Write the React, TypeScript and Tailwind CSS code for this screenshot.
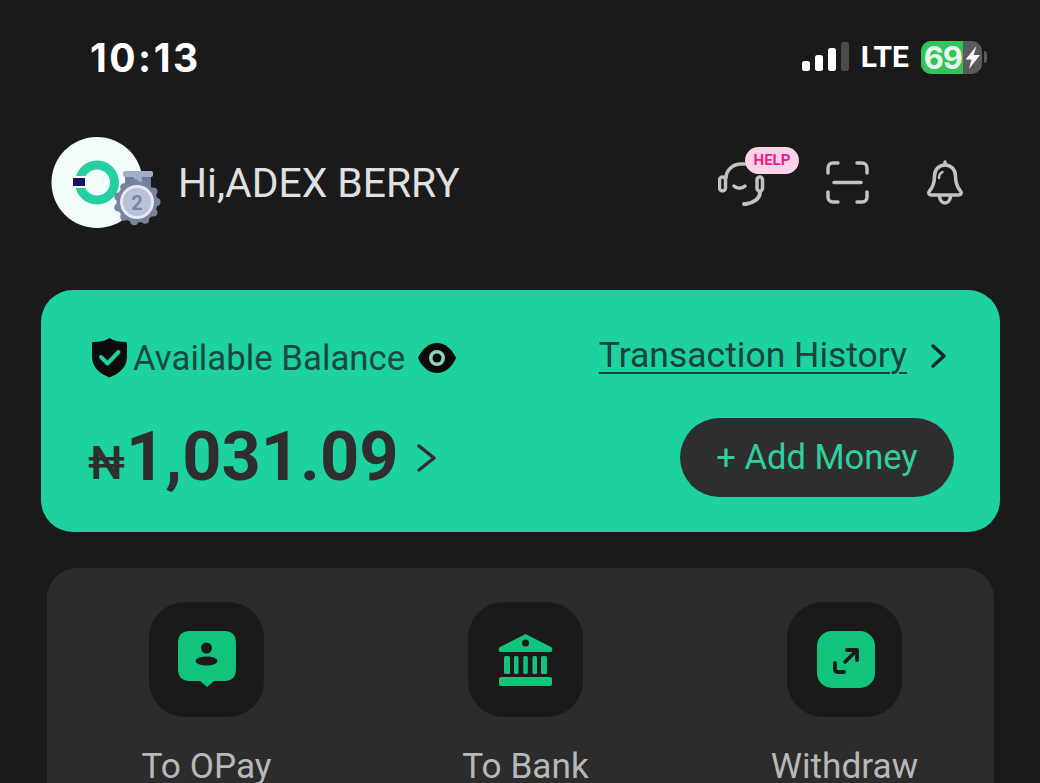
import React from "react";

const gearBumps = Array.from({ length: 11 }, (_, i) => {
  const a = (i / 11) * Math.PI * 2;
  return { x: 97 + Math.cos(a) * 19.5, y: 77 + Math.sin(a) * 19.5 };
});

function Avatar() {
  return (
    <svg width="130" height="110" viewBox="0 0 130 110" className="shrink-0">
      <circle cx="57" cy="57.5" r="45.5" fill="#f2fdfa" />
      <circle cx="57" cy="57.5" r="17.5" fill="none" stroke="#25cf9f" strokeWidth="9" />
      <rect x="30" y="51" width="18" height="12" fill="#f2fdfa" />
      <rect x="33" y="53" width="12" height="8" fill="#1b0f6b" />
      <rect x="83" y="46" width="30" height="6" rx="2" fill="#a3adc4" />
      <path d="M85 52h26v10H85z" fill="#6d7b9e" />
      <path d="M94 52h8v6h-8z" fill="#a3adc4" />
      {gearBumps.map((b, i) => (
        <circle key={i} cx={b.x} cy={b.y} r="4" fill="#76849f" />
      ))}
      <circle cx="97" cy="77" r="20.500" fill="#76849f" />
      <circle cx="97" cy="77" r="17" fill="#e6e8f3" />
      <circle cx="97" cy="77" r="14" fill="#b9c1d8" />
      <text x="97" y="84.500" textAnchor="middle" fontFamily="Roboto, sans-serif" fontWeight="700" fontSize="20" fill="#7685a8">2</text>
    </svg>
  );
}

function Signal() {
  return (
    <svg width="47" height="32" viewBox="0 0 47 32">
      <rect x="0" y="20" width="8" height="10" rx="2.500" fill="#fff" />
      <rect x="13" y="14" width="8" height="16" rx="2.500" fill="#fff" />
      <rect x="26" y="7" width="8" height="23" rx="2.500" fill="#fff" />
      <rect x="39" y="1" width="8" height="29" rx="2.500" fill="#4b4b4b" />
    </svg>
  );
}

function Battery() {
  return (
    <div className="relative flex h-[33px] w-[61px] overflow-hidden rounded-[10px] bg-[#5a5a5a]">
      <div className="flex w-[42px] items-center justify-end bg-[#34c25a] pr-[1px]">
        <span className="text-[31px] leading-none font-bold text-[#e8f7ec] font-['Inter',sans-serif] tracking-[-1px]">69</span>
      </div>
      <svg width="19" height="33" viewBox="0 0 19 33" className="shrink-0">
        <path d="M13.500 5 2.500 18.500h6L6 28l11-14h-6.500z" fill="#fff" />
      </svg>
    </div>
  );
}

function Headset() {
  return (
    <svg width="50" height="50" viewBox="0 0 50 50" fill="none" stroke="#c2c2c2" strokeWidth="3.500" strokeLinecap="round" strokeLinejoin="round">
      <path d="M8 17c0-8 7-14 15-14h4" />
      <rect x="1.500" y="16" width="6" height="14" rx="3" />
      <rect x="39" y="16" width="5.500" height="14" rx="2.700" />
      <path d="M16 25c3 3 8 3 11 0" />
      <path d="M42 31c0 7-7 11-14 12h-2" strokeWidth="4" />
    </svg>
  );
}

function Scan() {
  return (
    <svg width="43" height="43" viewBox="0 0 43 43" fill="none" stroke="#c2c2c2" strokeWidth="3.500" strokeLinecap="round" strokeLinejoin="round">
      <path d="M2 12V7c0-3 2-5 5-5h5" />
      <path d="M31 2h5c3 0 5 2 5 5v5" />
      <path d="M2 31v5c0 3 2 5 5 5h5" />
      <path d="M41 31v5c0 3-2 5-5 5h-5" />
      <path d="M8 21.500h27" />
    </svg>
  );
}

function Bell() {
  return (
    <svg width="36" height="46" viewBox="0 0 36 46" fill="none" stroke="#c2c2c2" strokeWidth="3.500" strokeLinecap="round" strokeLinejoin="round">
      <path d="M18 5c-6.500 0-10.500 5-10.500 11 0 6-1.500 11-5 15-1.500 2-.5 4 2 4h27c2.500 0 3.500-2 2-4-3.500-4-5-9-5-15 0-6-4-11-10.500-11z" />
      <path d="M18 2v3" />
      <path d="M12.500 36c0 4 2.500 7 5.500 7s5.500-3 5.500-7" />
      <path d="M12 18c0-3 1.500-5 3.500-6" strokeWidth="2.500" />
    </svg>
  );
}

function Shield() {
  return (
    <svg width="35" height="40" viewBox="0 0 35 40" className="shrink-0">
      <path d="M17.500 0c5 3 10 4 16 4 1 0 1.500.5 1.500 1.500v13c0 10-7 17-17.500 21C7 35.500 0 28.500 0 18.500v-13C0 4.500.5 4 1.500 4c6 0 11-1 16-4z" fill="#0c0c0c" />
      <path d="M9 19l6.500 6.500L26.500 14" fill="none" stroke="#1ed2a0" strokeWidth="4" strokeLinecap="round" strokeLinejoin="round" />
    </svg>
  );
}

function Eye() {
  return (
    <svg width="38" height="30" viewBox="0 0 38 30" className="shrink-0">
      <path d="M0 15C4 6 11 0 19 0s15 6 19 15c-4 9-11 15-19 15S4 24 0 15z" fill="#0a0a0a" />
      <circle cx="19" cy="15" r="8" fill="#8fd1bc" />
      <circle cx="19" cy="15" r="4.500" fill="#0a0a0a" />
    </svg>
  );
}

function Chevron({ w, h, color, sw }: { w: number; h: number; color: string; sw: number }) {
  return (
    <svg width={w} height={h} viewBox={`0 0 ${w} ${h}`} fill="none" stroke={color} strokeWidth={sw} strokeLinecap="round" strokeLinejoin="round" className="shrink-0">
      <path d={`M2 2L${w - 2} ${h / 2}L2 ${h - 2}`} />
    </svg>
  );
}

function OPayIcon() {
  return (
    <svg width="115" height="115" viewBox="0 0 115 115">
      <path d="M41 29h34c8 0 12 4 12 12v26c0 8-4 12-12 12H65l-7 6-7-6H41c-8 0-12-4-12-12V41c0-8 4-12 12-12z" fill="#12c37c" />
      <circle cx="57.500" cy="46" r="5.500" fill="#1a1a1a" />
      <ellipse cx="57.500" cy="59" rx="11" ry="4.500" fill="#1a1a1a" />
    </svg>
  );
}

function BankIcon() {
  return (
    <svg width="115" height="115" viewBox="0 0 115 115">
      <path d="M57.500 32L83 45c2 1 1.500 5-.5 5h-50c-2 0-2.500-4-.5-5z" fill="#12c37c" />
      <circle cx="57.500" cy="41" r="3.500" fill="#1a1a1a" />
      <rect x="36" y="54" width="6" height="18" rx="1.500" fill="#12c37c" />
      <rect x="46" y="54" width="4.500" height="18" rx="1.500" fill="#12c37c" />
      <rect x="55.300" y="54" width="4.500" height="18" rx="1.500" fill="#12c37c" />
      <rect x="64.500" y="54" width="4.500" height="18" rx="1.500" fill="#12c37c" />
      <rect x="73" y="54" width="6" height="18" rx="1.500" fill="#12c37c" />
      <rect x="31" y="75" width="53" height="9" rx="2" fill="#12c37c" />
    </svg>
  );
}

function WithdrawIcon() {
  return (
    <svg width="115" height="115" viewBox="0 0 115 115">
      <rect x="30" y="29" width="58" height="57" rx="15" fill="#12c37c" />
      <path d="M60 48h10v10M70 48L58 60M48 61v6c0 2 1 3 3 3h6" fill="none" stroke="#1a1a1a" strokeWidth="3.800" strokeLinecap="round" strokeLinejoin="round" />
    </svg>
  );
}

function Action({ label, children }: { label: string; children: React.ReactNode }) {
  return (
    <div className="flex w-[115px] shrink-0 flex-col items-center">
      <div className="h-[115px] w-[115px] rounded-[36px] bg-[#1a1a1a]">{children}</div>
      <div className="mt-[29px] text-[35.200px] leading-[40px] whitespace-nowrap text-[#b8b8b8]">{label}</div>
    </div>
  );
}

export default function App() {
  return (
    <div className="h-[783px] w-[1040px] overflow-hidden bg-[#1a1a1a] font-['Roboto',sans-serif]">
      <div className="flex h-[125px] items-center pb-[11px] pl-[90px] pr-[53px]">
        <span className="text-[39px] leading-none font-bold tracking-[2.500px] text-white font-['Inter',sans-serif]">10:13</span>
        <div className="ml-auto flex items-center">
          <Signal />
          <span className="ml-[12px] mr-[12px] text-[30px] leading-none font-bold text-white">LTE</span>
          <Battery />
          <div className="ml-[2px] h-[12px] w-[3px] rounded-r-full bg-[#5a5a5a]" />
        </div>
      </div>

      <div className="flex h-[110px] items-center pl-[40px] pr-[77px]">
        <Avatar />
        <span className="ml-[8px] mt-[6px] text-[40.800px] leading-none text-[#e0e0e0]">Hi,ADEX BERRY</span>
        <div className="ml-auto mt-[5px] flex items-center">
          <div className="relative mt-[6px]">
            <Headset />
            <div className="absolute left-[27px] top-[-14px] flex h-[27px] w-[54px] items-center justify-center rounded-full bg-[#fbd3e6] text-[15px] leading-none font-bold text-[#e8208a]">HELP</div>
          </div>
          <div className="ml-[58px]"><Scan /></div>
          <div className="ml-[58px]"><Bell /></div>
        </div>
      </div>

      <div className="ml-[41px] mt-[55px] h-[242px] w-[959px] rounded-[32px] bg-[#1ed2a0] pt-[48px]">
        <div className="flex h-[40px] items-center pl-[51px] pr-[54px]">
          <Shield />
          <span className="ml-[6px] text-[34.800px] leading-none text-[#19493f]">Available Balance</span>
          <span className="ml-[13px]"><Eye /></span>
          <span className="ml-auto -translate-y-[2px] text-[35.500px] leading-none text-[#17433a] underline decoration-[2px] underline-offset-[5px]">Transaction History</span>
          <span className="ml-[24px] -translate-y-[2px]"><Chevron w={15} h={24} color="#122a25" sw={3.500} /></span>
        </div>
        <div className="flex items-center pl-[47px] pr-[46px] pt-[40px]">
          <span className="translate-y-[5px] text-[46px] leading-none font-medium text-[#2e2e2e]">₦</span>
          <span className="ml-[1px] text-[68.500px] leading-none font-bold text-[#2e2e2e]">1,031.09</span>
          <span className="ml-[18px]"><Chevron w={19} h={28} color="#2e2e2e" sw={3.500} /></span>
          <button className="ml-auto flex h-[79px] w-[274px] items-center justify-center rounded-full bg-[#2e2e2e] text-[34.500px] leading-none text-[#2fd0a0]">+ Add Money</button>
        </div>
      </div>

      <div className="ml-[47px] mt-[36px] h-[300px] w-[947px] rounded-[30px] bg-[#2c2c2c] pl-[102px] pt-[34px]">
        <div className="flex gap-[204px]">
          <Action label="To OPay"><OPayIcon /></Action>
          <Action label="To Bank"><BankIcon /></Action>
          <Action label="Withdraw"><WithdrawIcon /></Action>
        </div>
      </div>
    </div>
  );
}
